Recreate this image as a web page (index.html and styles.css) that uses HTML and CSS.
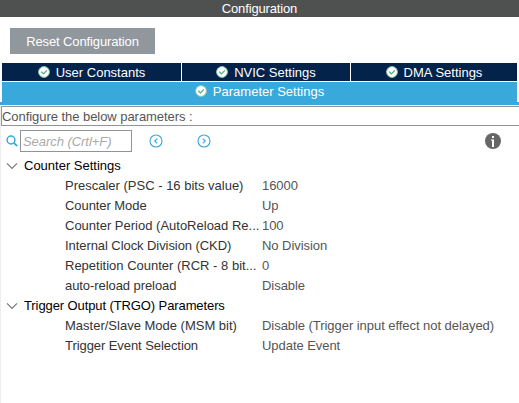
FILE: index.html
```html
<!DOCTYPE html>
<html lang="en">
<head>
<meta charset="utf-8">
<title>Configuration</title>
<link rel="stylesheet" href="styles.css">
</head>
<body>
<svg class="defs" aria-hidden="true">
  <symbol id="check" viewBox="0 0 12 12"><circle cx="6" cy="6" r="5.4" fill="#fff" stroke="#8ccaa5" stroke-width="1"/><path d="M3.2 5.6 5.4 7.8 8.9 4.3" fill="none" stroke="#4da875" stroke-width="1.2"/></symbol>
  <symbol id="chevron" viewBox="0 0 12 8"><path d="M1 1.3 6 6.3 11 1.3" fill="none" stroke="#777" stroke-width="1.2"/></symbol>
</svg>
<header class="title"><span>Configuration</span></header>
<div class="toolbar"><button class="reset"><span>Reset Configuration</span></button></div>
<nav class="tabs">
  <div class="tab"><svg class="check"><use href="#check"/></svg><span>User Constants</span></div>
  <div class="tab"><svg class="check"><use href="#check"/></svg><span>NVIC Settings</span></div>
  <div class="tab"><svg class="check"><use href="#check"/></svg><span>DMA Settings</span></div>
  <div class="tab active"><svg class="check"><use href="#check"/></svg><span>Parameter Settings</span></div>
</nav>
<main class="panel">
  <div class="caption"><span>Configure the below parameters :</span></div>
  <div class="searchbar">
    <svg class="magnifier" viewBox="0 0 12 12"><circle cx="5" cy="5" r="3.9" fill="none" stroke="#39a9dc" stroke-width="1.5"/><path d="m7.8 7.8 3.4 3.4" stroke="#39a9dc" stroke-width="1.7"/></svg>
    <div class="search"><span>Search (Crtl+F)</span></div>
    <svg class="arrow prev" viewBox="0 0 14 14"><circle cx="7" cy="7" r="6" fill="none" stroke="#39a9dc" stroke-width="1.1"/><path d="M8.2 4.6 5.8 7l2.4 2.4" fill="none" stroke="#39a9dc" stroke-width="1.2"/></svg>
    <svg class="arrow next" viewBox="0 0 14 14"><circle cx="7" cy="7" r="6" fill="none" stroke="#39a9dc" stroke-width="1.1"/><path d="M5.8 4.6 8.2 7 5.8 9.4" fill="none" stroke="#39a9dc" stroke-width="1.2"/></svg>
    <svg class="info" viewBox="0 0 16 16"><circle cx="8" cy="8" r="8" fill="#666"/><path d="M7 3h2v2H7zM6 6.5h3V14H7V7.5H6z" fill="#fff"/></svg>
  </div>
  <div class="tree">
    <div class="group"><svg class="chevron"><use href="#chevron"/></svg><span>Counter Settings</span></div>
    <div class="row"><span class="name wide">Prescaler (PSC - 16 bits value)</span><span class="value">16000</span></div>
    <div class="row"><span class="name">Counter Mode</span><span class="value">Up</span></div>
    <div class="row"><span class="name wide">Counter Period (AutoReload Re...</span><span class="value">100</span></div>
    <div class="row"><span class="name">Internal Clock Division (CKD)</span><span class="value">No Division</span></div>
    <div class="row"><span class="name wide">Repetition Counter (RCR - 8 bit...</span><span class="value">0</span></div>
    <div class="row"><span class="name">auto-reload preload</span><span class="value">Disable</span></div>
    <div class="group"><svg class="chevron"><use href="#chevron"/></svg><span class="tight">Trigger Output (TRGO) Parameters</span></div>
    <div class="row"><span class="name wide">Master/Slave Mode (MSM bit)</span><span class="value">Disable (Trigger input effect not delayed)</span></div>
    <div class="row"><span class="name">Trigger Event Selection</span><span class="value">Update Event</span></div>
  </div>
</main>
</body>
</html>
```
FILE: styles.css
```css
* { box-sizing: border-box; }
body { margin: 0; height: 403px; overflow: hidden; background: #fff; font: 13px/20px "Liberation Sans", Arial, sans-serif; white-space: nowrap; }
svg { display: block; flex: none; }
.defs { display: none; }
.title { height: 17px; line-height: 17px; background: #4f5150; color: #fff; text-align: center; letter-spacing: -.15px; }
.toolbar { height: 46px; padding: 11px 0 0 10px; }
.reset { display: block; width: 145px; height: 26px; padding: 0; border: 0; background: #90979d; color: #fff; font: inherit; line-height: 28px; letter-spacing: -.12px; }
.tabs { display: grid; grid-template-columns: 179px 168px 166px; column-gap: 1px; row-gap: 1px; padding: 0 2px; height: 39px; grid-template-rows: 18px 20px; }
.tab { display: flex; align-items: center; justify-content: center; gap: 6px; background: #03234b; color: #fff; line-height: 16px; }
.tab span { padding-top: 2px; }
.tab.active { grid-column: 1 / -1; background: #39a9dc; padding-bottom: 2px; }
.check { width: 12px; height: 12px; }
.panel { border-top: 3px solid #39a9dc; height: 301px; box-shadow: inset 1px 0 #eee; padding-left: 1px; }
.caption { margin-top: 1px; height: 20px; border: 1px solid #8f9499; border-right: 0; line-height: 20px; color: #555; letter-spacing: -.05px; }
.searchbar { display: flex; align-items: center; height: 30px; padding: 0 18px 0 5px; }
.magnifier { width: 12px; height: 12px; }
.search { width: 112px; height: 22px; margin-left: 2px; border: 1px solid #8f9499; padding-left: 2px; line-height: 22px; font-style: italic; color: #aaa; letter-spacing: -.05px; }
.arrow { width: 14px; height: 14px; }
.prev { margin-left: 17px; }
.next { margin-left: 34px; }
.info { width: 16px; height: 16px; margin-left: auto; }
.group { display: flex; align-items: center; height: 20px; padding-left: 5px; color: #000; }
.chevron { width: 12px; height: 8px; margin-right: 6px; }
.tight { letter-spacing: -.1px; }
.row { display: grid; grid-template-columns: 197px 1fr; height: 20px; padding-left: 64px; }
.name { color: #333; letter-spacing: -.07px; }
.name.wide { letter-spacing: 0; }
.value { color: #555; letter-spacing: -.05px; }
```
